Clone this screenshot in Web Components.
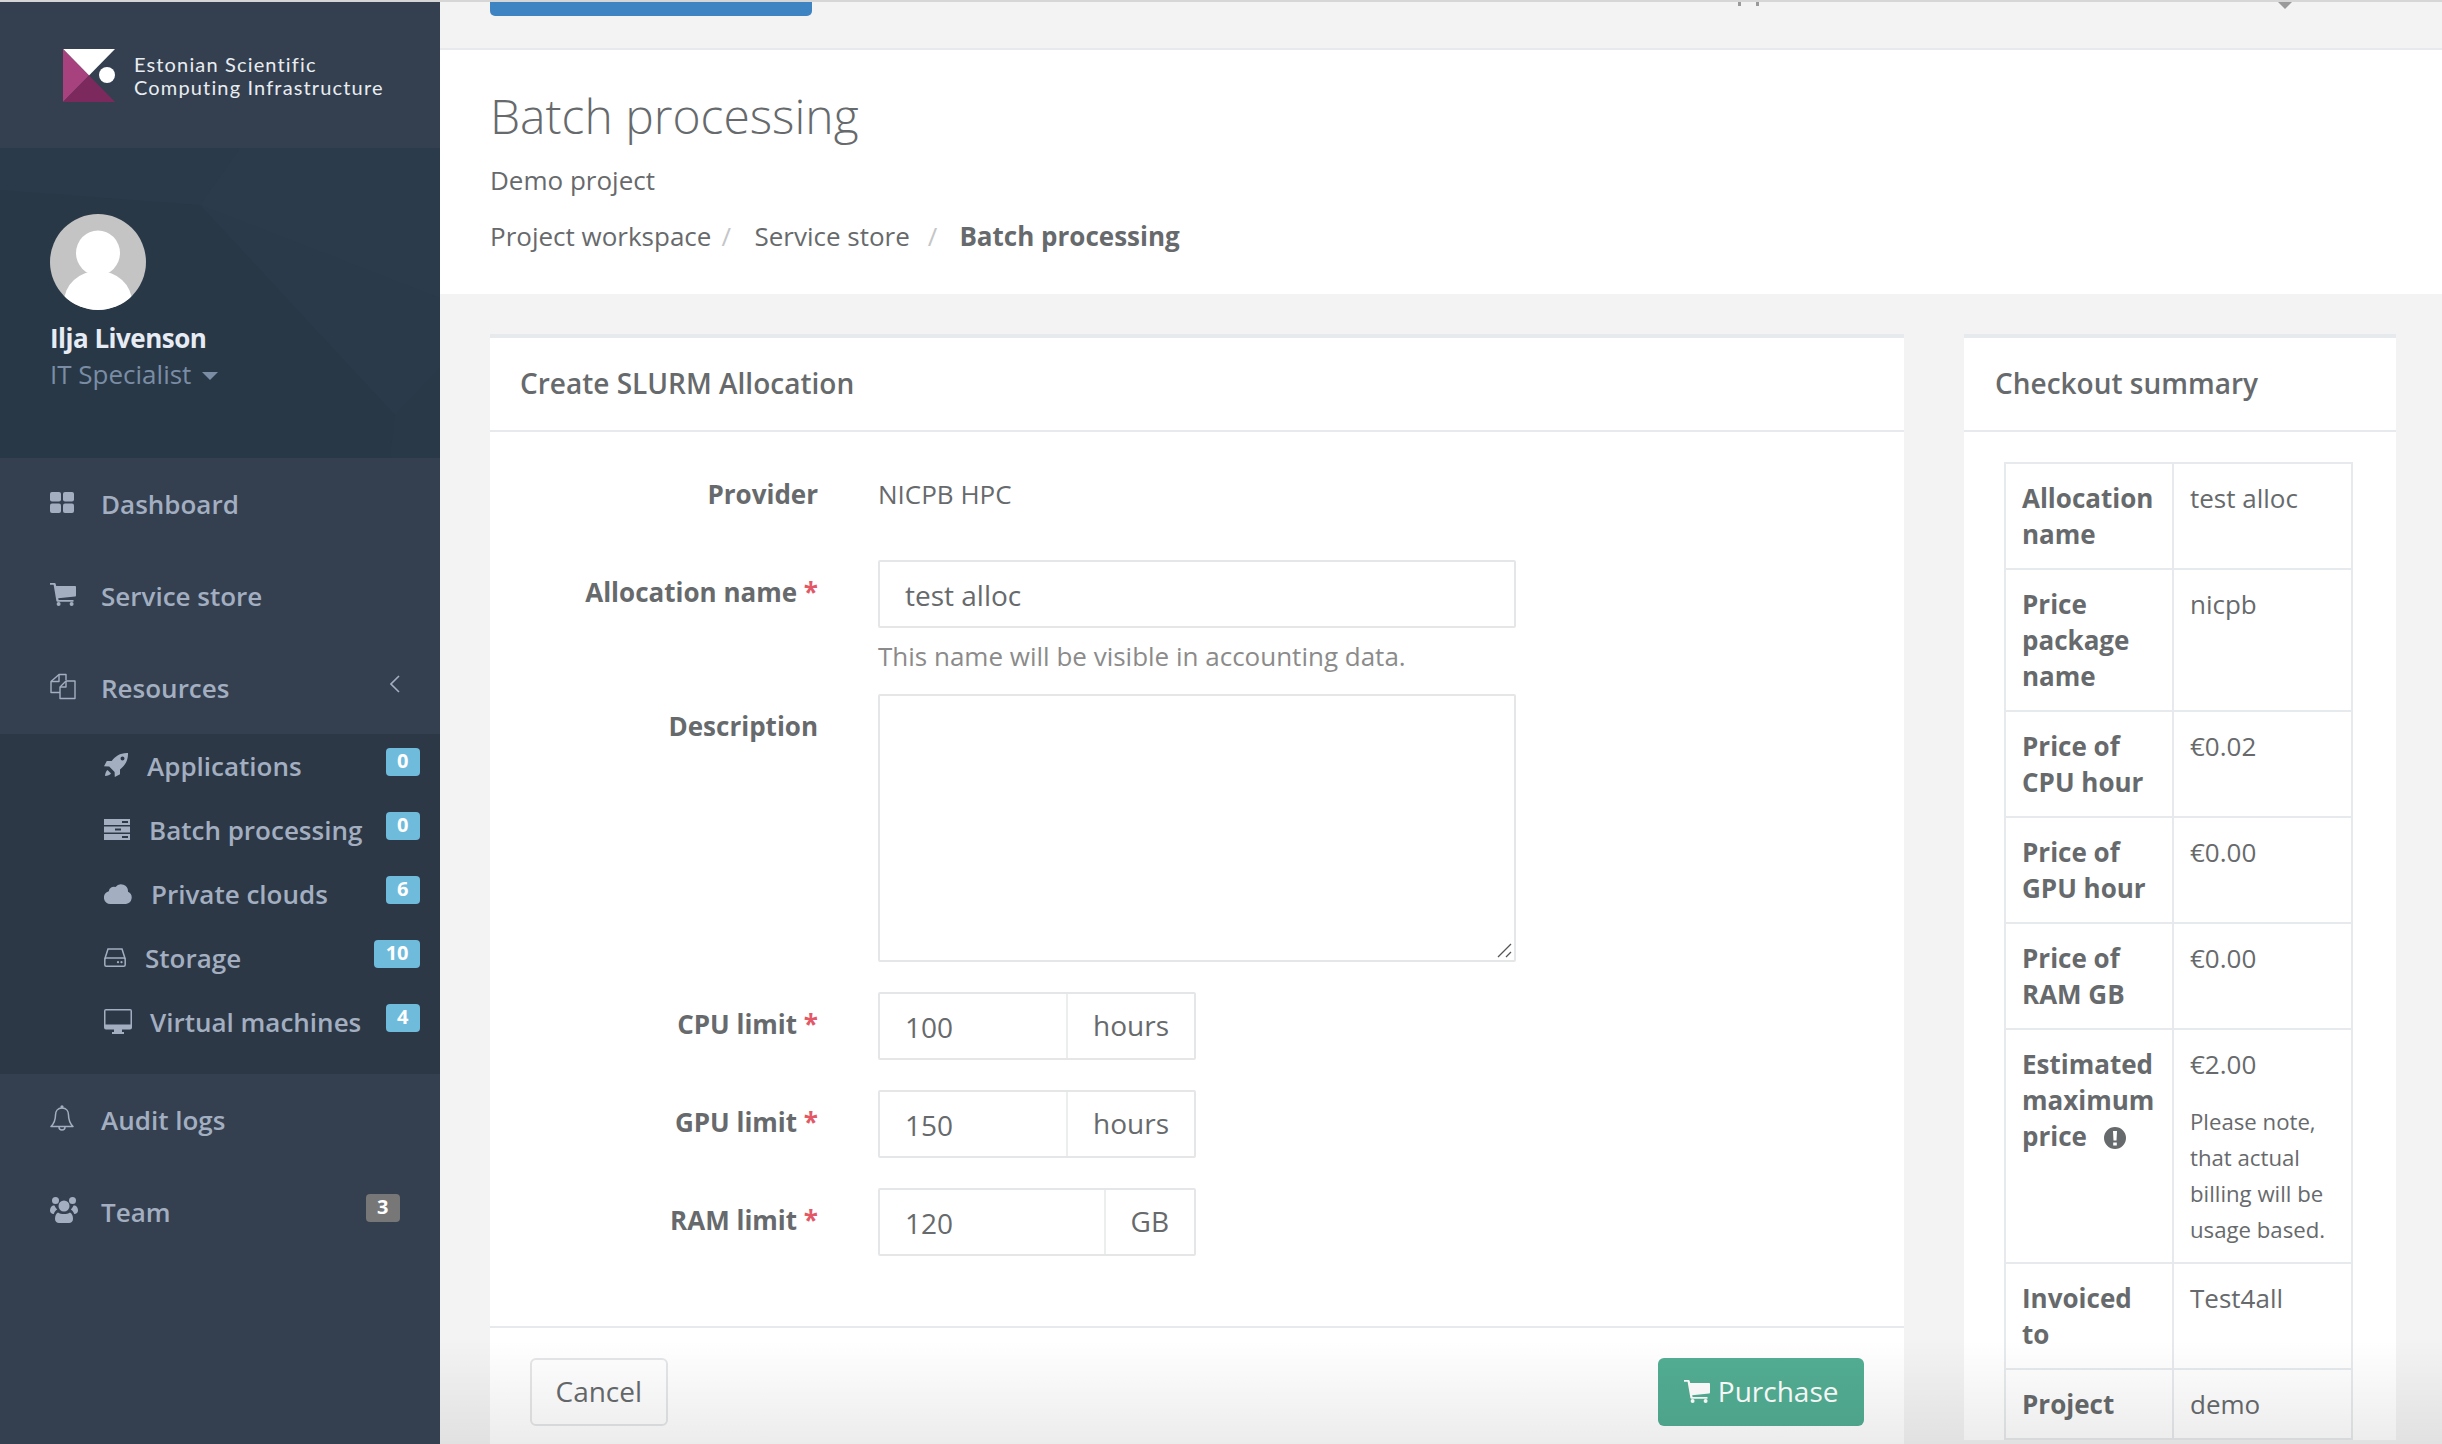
<!DOCTYPE html>
<html lang="en">
<head>
<meta charset="utf-8">
<title>Batch processing</title>
<style>
html,body{margin:0;padding:0;height:100%;overflow:hidden;background:#f3f3f3}
body{font-family:"Open Sans","Noto Sans",sans-serif;color:#676a6c}
</style>
</head>
<body>
<app-shell>
  <app-sidebar slot="sidebar">
    <brand-logo>Estonian Scientific<br>Computing Infrastructure</brand-logo>
    <user-profile name="Ilja Livenson" role="IT Specialist"></user-profile>
    <nav-item icon="th" tx="51">Dashboard</nav-item>
    <nav-item icon="cart" tx="51">Service store</nav-item>
    <nav-item icon="files" tx="51" chevron>Resources</nav-item>
    <nav-sub>
      <nav-item sub icon="rocket" tx="43" badge="0">Applications</nav-item>
      <nav-item sub icon="server" tx="45" badge="0">Batch processing</nav-item>
      <nav-item sub icon="cloud" tx="47" badge="6">Private clouds</nav-item>
      <nav-item sub icon="hdd" tx="41" badge="10">Storage</nav-item>
      <nav-item sub icon="desktop" tx="46" badge="4">Virtual machines</nav-item>
    </nav-sub>
    <nav-item icon="bell" tx="51">Audit logs</nav-item>
    <nav-item icon="users" tx="51" badge="3" tone="gray">Team</nav-item>
  </app-sidebar>

  <top-strip></top-strip>
  <page-header heading="Batch processing" sub="Demo project">
    <crumb-item before="10" after="23.5">Project workspace</crumb-item>
    <crumb-item before="18" after="22">Service store</crumb-item>
    <crumb-item current>Batch processing</crumb-item>
  </page-header>
  <page-content>
    <ui-card heading="Create SLURM Allocation" style="flex:0 0 1414px">
      <form-row label="Provider" kind="static">NICPB HPC</form-row>
      <form-row label="Allocation name" required kind="input" help="This name will be visible in accounting data."><text-box>test alloc</text-box></form-row>
      <form-row label="Description" kind="input"><area-box></area-box></form-row>
      <form-row label="CPU limit" required kind="group"><input-group unit="hours">100</input-group></form-row>
      <form-row label="GPU limit" required kind="group"><input-group unit="hours">150</input-group></form-row>
      <form-row label="RAM limit" required kind="group"><input-group unit="GB">120</input-group></form-row>
      <card-footer slot="footer">
        <ui-button>Cancel</ui-button>
        <ui-button primary><ui-icon name="cart" style="width:26px;height:23px;margin-right:8px"></ui-icon>Purchase</ui-button>
      </card-footer>
    </ui-card>
    <ui-card heading="Checkout summary" style="flex:0 0 432px" compact>
      <summary-table>
        <summary-row label="Allocation name">test alloc</summary-row>
        <summary-row label="Price package name">nicpb</summary-row>
        <summary-row label="Price of CPU hour">€0.02</summary-row>
        <summary-row label="Price of GPU hour">€0.00</summary-row>
        <summary-row label="Price of RAM GB">€0.00</summary-row>
        <summary-row label="Estimated maximum price" info note="Please note, that actual billing will be usage based.">€2.00</summary-row>
        <summary-row label="Invoiced to">Test4all</summary-row>
        <summary-row label="Project">demo</summary-row>
      </summary-table>
    </ui-card>
  </page-content>
</app-shell>

<script>
const ICONS = {
  th: ['0 0 24 21','<rect width="11" height="9.6" rx="2"/><rect x="13" width="11" height="9.6" rx="2"/><rect y="11.4" width="11" height="9.6" rx="2"/><rect x="13" y="11.4" width="11" height="9.6" rx="2"/>'],
  cart: ['0 0 26 23','<path d="M0 0h4.6c.6 0 1 .3 1.1.9L6.2 3H25c.7 0 1 .5 1 1v8.4c0 .5-.4 1-.9 1L8.2 15.200l.4 1.800H23.500v1.800H7.400c-.5 0-.9-.3-1-.8L3.600 1.800H0z"/><circle cx="8.600" cy="21" r="2"/><circle cx="21.600" cy="21" r="2"/>'],
  files: ['0 0 26 27','<g fill="none" stroke="currentColor" stroke-width="1.400" stroke-linejoin="round"><path d="M16 7V1.500H9L1 8.500V19.500H10"/><path d="M9 1.500V8.500H1"/><path d="M25 8V25.500H10V14L16 8z"/><path d="M16 8V14H10"/></g>'],
  rocket: ['0 0 24 24','<path fill-rule="evenodd" d="M24 0C16.500-.2 11.600 3 7.700 8H2.800L0 13.300l5.200.2 5.400 5.400.2 5.100L16 21.300v-4.900C21 12.500 24.300 7.500 24 0zM16.500 5.500a2 2 0 1 1 2 2 2 2 0 0 1-2-2z"/><path d="M3.500 17c-1.500 1.200-2.300 3.200-2.500 6 2.800-.2 4.800-1 6-2.500z"/>'],
  server: ['0 0 26 21','<path fill-rule="evenodd" d="M0 0h26v6H0zM18 2v2h6V2zM0 7.500h26v6H0zM11 9.500v2h6v-2zM0 15h26v6H0zM18 17v2h6v-2z"/>'],
  cloud: ['0 0 28 21','<path d="M6.500 21A6.500 6.500 0 0 1 4.800 8.200 5 5 0 0 1 11.500 4 7 7 0 0 1 24 8.700 6.500 6.500 0 0 1 22 21z"/>'],
  hdd: ['0 0 22 19','<g fill="none" stroke="currentColor" stroke-width="1.500"><path d="M.8 11 4 1H18l3.200 10"/><rect x=".8" y="10" width="20.400" height="8.200" rx="1.500"/></g><circle cx="14" cy="14.200" r="1.100"/><circle cx="17.500" cy="14.200" r="1.100"/>'],
  desktop: ['0 0 28 25','<path fill-rule="evenodd" d="M2 0h24a2 2 0 0 1 2 2v16.500a2 2 0 0 1-2 2H18v2.500h2v2H8v-2h2v-2.500H2a2 2 0 0 1-2-2V2a2 2 0 0 1 2-2zM1.500 1.500V15.500h25V1.500z"/>'],
  bell: ['0 0 24 26','<g fill="none" stroke="currentColor" stroke-width="1.500" stroke-linejoin="round"><path d="M12 3C7.500 3 5.500 6.500 5.500 10c0 6-2 9-4.500 11.500H23C20.500 19 18.500 16 18.500 10 18.500 6.500 16.500 3 12 3z"/><path d="M9 22a3 3 0 0 0 6 0"/></g><circle cx="12" cy="1.800" r="1.600"/>'],
  users: ['0 0 28 26','<circle cx="14" cy="9" r="5.500"/><circle cx="5.500" cy="3.500" r="3.500"/><circle cx="22.500" cy="3.500" r="3.500"/><path d="M3 8.500c-2 .8-3 3-3 5s1.500 3.500 3.800 3.500c.6-2 2-3.800 3.400-4.500C6 11 5 10 4.500 8.500z"/><path d="M25 8.500c2 .8 3 3 3 5s-1.500 3.500-3.800 3.500c-.6-2-2-3.800-3.400-4.500 1.200-1.500 2.200-2.500 2.700-4z"/><path d="M8 15.500c1.500 1 3.800 1.500 6 1.500s4.500-.5 6-1.500c2 1 3 3.500 3 6.500 0 2.500-2 4-4 4H9c-2 0-4-1.500-4-4 0-3 1-5.500 3-6.500z"/>'],
  alert: ['0 0 22 22','<path fill-rule="evenodd" d="M11 0a11 11 0 1 1 0 22 11 11 0 0 1 0-22zM9 4l.5 9.500h3L13 4zM9.200 15.500v3h3.600v-3z"/>']
};
function wc(name, html, onReady){
  customElements.define(name, class extends HTMLElement{
    connectedCallback(){
      if(this.shadowRoot) return;
      const root = this.attachShadow({mode:'open'});
      root.innerHTML = typeof html === 'function' ? html(this) : html;
      if(onReady) onReady(this, root);
    }
  });
}
wc('ui-icon', el => {
  const [vb, body] = ICONS[el.getAttribute('name')];
  return `<style>:host{display:inline-flex;flex:none;color:inherit}svg{display:block;width:100%;height:100%;fill:currentColor}</style><svg viewBox="${vb}" aria-hidden="true">${body}</svg>`;
});
wc('app-shell', `<style>
  :host{display:flex;height:100vh;width:100%;border-top:2px solid #d6d6d6;box-sizing:border-box;overflow:hidden}
  .side{flex:0 0 440px;width:440px;display:block}
  main{flex:1;min-width:0;display:flex;flex-direction:column;position:relative;overflow:hidden;background:#f3f3f3}
  .fade{position:absolute;left:0;right:0;bottom:0;height:104px;background:linear-gradient(rgba(0,0,0,0),rgba(0,0,0,.075));pointer-events:none}
</style><div class="side"><slot name="sidebar"></slot></div><main><slot></slot><div class="fade"></div></main>`);
wc('app-sidebar', `<style>:host{display:flex;flex-direction:column;height:100%;background:#344050;font-family:"Open Sans",sans-serif}</style><slot></slot>`);
wc('brand-logo', `<style>
  :host{display:flex;align-items:center;height:146px;box-sizing:border-box;padding:0 0 0 63px;background:#344050;color:#e9edf1;font:400 20px/23px Lato,"Open Sans",sans-serif;letter-spacing:1.150px;white-space:nowrap}
  svg{width:52px;height:53px;margin-right:19px;flex:none;display:block}
  div{padding-top:2px}
</style><svg viewBox="0 0 52 53" aria-hidden="true">
  <path fill="#fff" d="M0 0H52L26 26.500z"/>
  <path fill="#a8427f" d="M0 0 26 26.500 0 53z"/>
  <path fill="#7c2a5d" d="M0 53 26 26.500 52 53z"/>
  <circle cx="44" cy="26" r="8" fill="#fff"/>
</svg><div><slot></slot></div>`);
wc('user-profile', el => `<style>
  :host{display:block;position:relative;height:310px;box-sizing:border-box;padding:66px 0 0 50px;background:#2b3a4a;overflow:hidden}
  .bg{position:absolute;inset:0;width:100%;height:100%}
  .av,.n,.r{position:relative}
  .av{display:block;width:96px;height:96px}
  .n{margin:10px 0 0;font:700 26px/36px "Open Sans",sans-serif;letter-spacing:-.5px;color:#e7ecf4}
  .r{margin:0;font:400 26px/36px "Open Sans",sans-serif;color:#7a8da5;display:flex;align-items:center}
  .c{width:0;height:0;border:8px solid transparent;border-top-color:#7a8da5;border-bottom:0;margin:4px 0 0 11px}
</style>
<svg class="bg" viewBox="0 0 440 310" preserveAspectRatio="none" aria-hidden="true">
  <path fill="#293847" d="M0 42 200 57 395 267 390 310H0z"/>
  <path fill="#2c3b4b" d="M200 57 240 0H440V150z"/>
  <path fill="#2a3948" d="M395 267 440 220V310H390z"/>
</svg>
<svg class="av" viewBox="0 0 96 96" aria-hidden="true"><defs><clipPath id="c"><circle cx="48" cy="48" r="48"/></clipPath></defs><circle cx="48" cy="48" r="48" fill="#c4c4c4"/><g clip-path="url(#c)" fill="#fff"><ellipse cx="48" cy="39" rx="22" ry="22.500"/><ellipse cx="48" cy="88" rx="34" ry="31"/></g></svg>
<div class="n">${el.getAttribute('name')}</div>
<div class="r"><span>${el.getAttribute('role')}</span><i class="c"></i></div>`);
wc('nav-item', el => {
  const sub = el.hasAttribute('sub');
  const badge = el.getAttribute('badge');
  const gray = el.getAttribute('tone') === 'gray';
  const sizes = {th:[24,21],cart:[26,23],files:[26,27],rocket:[24,24],server:[26,21],cloud:[28,21],hdd:[22,19],desktop:[28,25],bell:[24,26],users:[28,26]};
  const [w,h] = sizes[el.getAttribute('icon')];
  return `<style>
    :host{display:flex;align-items:center;height:${sub?64:92}px;box-sizing:border-box;padding:0 ${gray?40:20}px 0 ${sub?104:50}px;color:#a3afc1;font:600 26px/36px "Open Sans",sans-serif}
    .ic{flex:0 0 ${el.getAttribute('tx')}px;display:flex;align-items:center;transform:translateY(${sub?-1:-2}px)}
    ui-icon{width:${w}px;height:${h}px}
    .sp{flex:1}
    .b{height:28px;min-width:34px;box-sizing:border-box;padding:0 11.5px;border-radius:4px;background:${gray?'#777':'#6fbbdc'};color:#fff;font:700 20px/26px "Open Sans",sans-serif;text-align:center;margin-top:-8px}
    svg{width:10px;height:20px;fill:none;stroke:#a3afc1;stroke-width:1.600;margin:-8px 20px 0 0}
  </style><span class="ic"><ui-icon name="${el.getAttribute('icon')}"></ui-icon></span><slot></slot><span class="sp"></span>${badge!==null?`<span class="b">${badge}</span>`:''}${el.hasAttribute('chevron')?'<svg viewBox="0 0 10 20" aria-hidden="true"><path d="M9 2 1 10l8 8"/></svg>':''}`;
});
wc('nav-sub', `<style>:host{display:block;background:#2d3846;padding-bottom:20px}</style><slot></slot>`);
wc('top-strip', `<style>
  :host{display:flex;flex:none;height:46px;box-sizing:border-box;padding-left:50px;background:#f3f3f3}
  .b{width:322px;height:14px;background:#3f84c2;border-radius:0 0 5px 5px}
  .t{width:3px;height:4px;background:#9a9a9a}
  .c{width:0;height:0;border:7px solid transparent;border-top-color:#9a9a9a;border-bottom:0;margin-left:519px}
</style><div class="b"></div><div class="t" style="margin-left:926px"></div><div class="t" style="margin-left:15px"></div><div class="c"></div>`);
wc('page-header', el => `<style>
  :host{display:block;flex:none;height:246px;box-sizing:border-box;padding:37px 50px 0;background:#fff;border-top:2px solid #e7eaec;color:#676a6c}
  h1{margin:0;font:300 48px/58px "Open Sans",sans-serif}
  p{margin:17px 0 0;font:400 26px/36px "Open Sans",sans-serif}
  nav{display:flex;margin-top:20px}
</style><h1>${el.getAttribute('heading')}</h1><p>${el.getAttribute('sub')}</p><nav><slot></slot></nav>`);
wc('crumb-item', el => `<style>
  :host{display:inline-flex;font:${el.hasAttribute('current')?700:400} 26px/36px "Open Sans",sans-serif;color:#676a6c;white-space:nowrap}
  i{font-style:normal;font-weight:400;color:#c4c6c8;margin:0 ${el.getAttribute('after')||0}px 0 ${el.getAttribute('before')||0}px}
</style><slot></slot>${el.hasAttribute('current')?'':'<i>/</i>'}`);
wc('page-content', `<style>:host{display:flex;flex:none;align-items:flex-start;gap:60px;padding:40px 0 0 50px}</style><slot></slot>`);
wc('ui-card', el => `<style>
  :host{display:block;background:#fff;border-top:4px solid #e7eaec}
  header{box-sizing:border-box;border-bottom:2px solid #e7eaec;height:94px;padding:0 ${el.hasAttribute('compact')?31:30}px 2px;display:flex;align-items:center;font:600 28px/36px "Open Sans",sans-serif;color:#676a6c}
  .b{padding:${el.hasAttribute('compact')?'30px 0 0 40px':'44px 0 40px'}}
</style><header>${el.getAttribute('heading')}</header><div class="b"><slot></slot></div><slot name="footer"></slot>`);
wc('form-row', el => {
  const kind = el.getAttribute('kind');
  const help = el.getAttribute('help');
  const top = {static:0,input:14,group:14}[kind];
  return `<style>
    :host{display:grid;grid-template-columns:328px 1fr;column-gap:60px;margin-bottom:${kind==='static'?48:help?20:30}px;font:400 26px/36px "Open Sans",sans-serif;color:#676a6c}
    label{text-align:right;font-weight:700;color:#676a6c;padding-top:${top}px}
    b{color:#e25867;font-weight:700}
    .h{color:#8b8b8b;margin-top:10px}
  </style><label>${el.getAttribute('label')}${el.hasAttribute('required')?' <b>*</b>':''}</label><div><slot></slot>${help?`<div class="h">${help}</div>`:''}</div>`;
});
wc('text-box', `<style>:host{display:block;width:638px;height:68px;box-sizing:border-box;border:2px solid #e5e6e7;border-radius:2px;padding:14px 25px 0;font:400 28px/38px "Open Sans",sans-serif;color:#676a6c}</style><slot></slot>`);
wc('area-box', `<style>:host{display:block;position:relative;width:638px;height:268px}textarea{display:block;box-sizing:border-box;width:638px;height:268px;margin:0;border:2px solid #e5e6e7;border-radius:2px;background:#fff;outline:0;resize:none}svg{position:absolute;right:4px;bottom:4px;width:15px;height:15px;fill:none;stroke:#555;stroke-width:1.300}</style><textarea aria-label="Description"></textarea><svg viewBox="0 0 15 15" aria-hidden="true"><path d="M1 14 14 1M9 14l5-5"/></svg>`);
wc('input-group', el => `<style>
  :host{display:flex;width:318px;height:68px;box-sizing:border-box;border:2px solid #e5e6e7;border-radius:2px;color:#676a6c}
  .v{flex:1;padding:14px 25px 0;font:400 28px/38px "Open Sans",sans-serif}
  .u{flex:none;padding:0 25px 2px;border-left:2px solid #eceded;display:flex;align-items:center;font:400 28px/38px "Open Sans",sans-serif}
</style><div class="v"><slot></slot></div><div class="u">${el.getAttribute('unit')}</div>`);
wc('card-footer', `<style>:host{display:flex;justify-content:space-between;border-top:2px solid #e7eaec;padding:30px 40px 40px}</style><slot></slot>`);
wc('ui-button', el => {
  const p = el.hasAttribute('primary');
  return `<style>:host{display:inline-flex;align-items:center;height:68px;box-sizing:border-box;padding:0 ${p?25.5:23.5}px 2px;border-radius:6px;font:400 28px/38px "Open Sans",sans-serif;${p?'background:#52ae93;color:#fff;':'background:#fff;border:2px solid #e5e6e7;color:#676a6c;'}}</style><slot></slot>`;
});
wc('summary-table', `<style>:host{display:block;width:349px;border:solid #e7eaec;border-width:2px 2px 0 2px;box-sizing:border-box;font:400 26px/36px "Open Sans",sans-serif;color:#676a6c}</style><slot></slot>`);
wc('summary-row', el => {
  const note = el.getAttribute('note');
  return `<style>
    :host{display:grid;grid-template-columns:168px 1fr;border-bottom:2px solid #e7eaec}
    .k,.v{padding:16px 16px;min-width:0}
    .k{font-weight:700;border-right:2px solid #e7eaec}
    ui-icon{width:22px;height:22px;margin-left:10px;vertical-align:-3px}
    .n{font-size:22.2px;margin:21.5px 0 -1.5px;width:140px}
  </style><div class="k">${el.getAttribute('label')}${el.hasAttribute('info')?' <ui-icon name="alert"></ui-icon>':''}</div><div class="v"><slot></slot>${note?`<div class="n">${note}</div>`:''}</div>`;
});
</script>
</body>
</html>
